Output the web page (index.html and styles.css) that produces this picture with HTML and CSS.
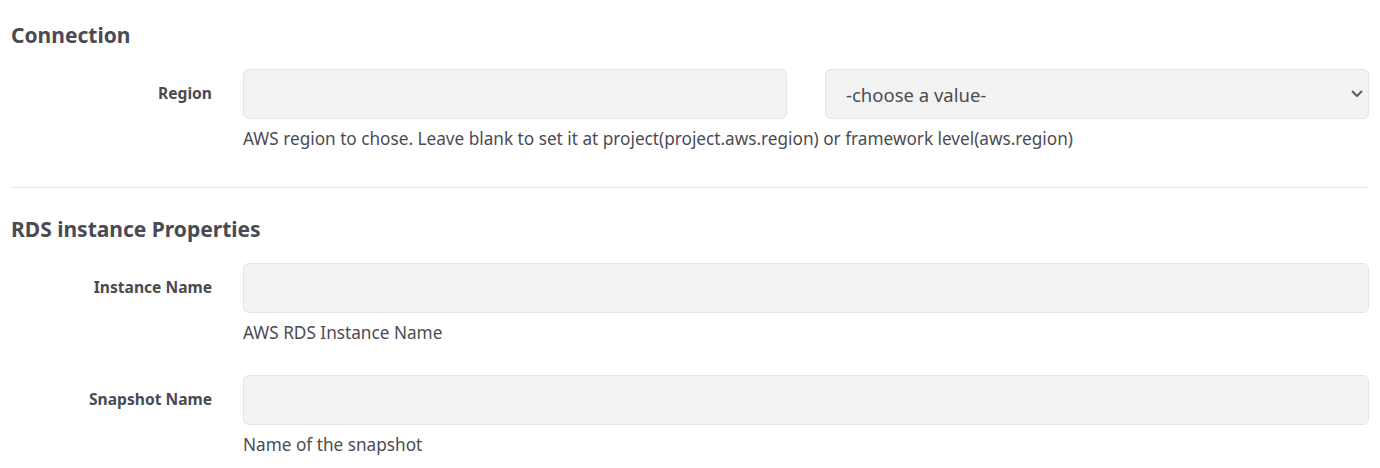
FILE: index.html
```html
<!DOCTYPE html>
<html>
<head>
<meta charset="utf-8">
<link rel="stylesheet" href="styles.css">
</head>
<body>
<div class="page">
  <section class="section">
    <h3 class="section-title">Connection</h3>
    <div class="field">
      <label class="field-label">Region</label>
      <div class="field-body">
        <div class="pair">
          <input class="text-input" type="text">
          <div class="select-wrap">
            <select class="select-input">
              <option>-choose a value-</option>
            </select>
            <svg class="chevron" width="12" height="8" viewBox="0 0 12 8"><path d="M1.5 1.5 L6 6 L10.5 1.5" fill="none" stroke="#55555c" stroke-width="1.8" stroke-linecap="round" stroke-linejoin="round"/></svg>
          </div>
        </div>
        <div class="help">AWS region to chose. Leave blank to set it at project(project.aws.region) or framework level(aws.region)</div>
      </div>
    </div>
  </section>
  <hr class="divider">
  <section class="section">
    <h3 class="section-title">RDS instance Properties</h3>
    <div class="field">
      <label class="field-label">Instance Name</label>
      <div class="field-body">
        <input class="text-input" type="text">
        <div class="help">AWS RDS Instance Name</div>
      </div>
    </div>
    <div class="field field-next">
      <label class="field-label">Snapshot Name</label>
      <div class="field-body">
        <input class="text-input" type="text">
        <div class="help">Name of the snapshot</div>
      </div>
    </div>
  </section>
</div>
</body>
</html>
```

FILE: styles.css
```css
* { box-sizing: border-box; }
html, body { margin: 0; padding: 0; background: #ffffff; }
body {
  font-family: "Noto Sans", "Open Sans", sans-serif;
  color: #4b4b53;
}
.page { padding: 23px 11px 0 11px; }
.section-title {
  margin: 0;
  font-size: 21px;
  line-height: 24px;
  font-weight: 700;
  color: #4a4a52;
}
.field {
  display: grid;
  grid-template-columns: 201px 1fr;
  column-gap: 31px;
  margin-top: 22px;
}
.field-next { margin-top: 32px; }
.field-label {
  height: 50px;
  display: flex;
  align-items: center;
  justify-content: flex-end;
  padding-bottom: 3px;
  font-size: 15.6px;
  font-weight: 700;
  color: #4a4a52;
}
.field-body { min-width: 0; }
.pair {
  display: grid;
  grid-template-columns: 1fr 1fr;
  column-gap: 38px;
}
.text-input, .select-input {
  display: block;
  width: 100%;
  height: 50px;
  background: #f3f3f3;
  border: 1px solid #e4e4e4;
  border-radius: 6px;
  outline: none;
  margin: 0;
  font-family: inherit;
  font-size: 18.5px;
  color: #4b4b53;
  padding: 0 20px;
}
.select-wrap { position: relative; }
.select-input {
  appearance: none;
  -webkit-appearance: none;
}
.chevron {
  position: absolute;
  right: 6px;
  top: 21px;
  pointer-events: none;
}
.help {
  margin-top: 10px;
  font-size: 17.2px;
  line-height: 20px;
  color: #4b4b53;
}
.divider {
  margin: 38px 0 0 0;
  border: 0;
  border-top: 1px solid #e5e5e5;
  height: 0;
}
.divider + .section { padding-top: 29px; }
```
